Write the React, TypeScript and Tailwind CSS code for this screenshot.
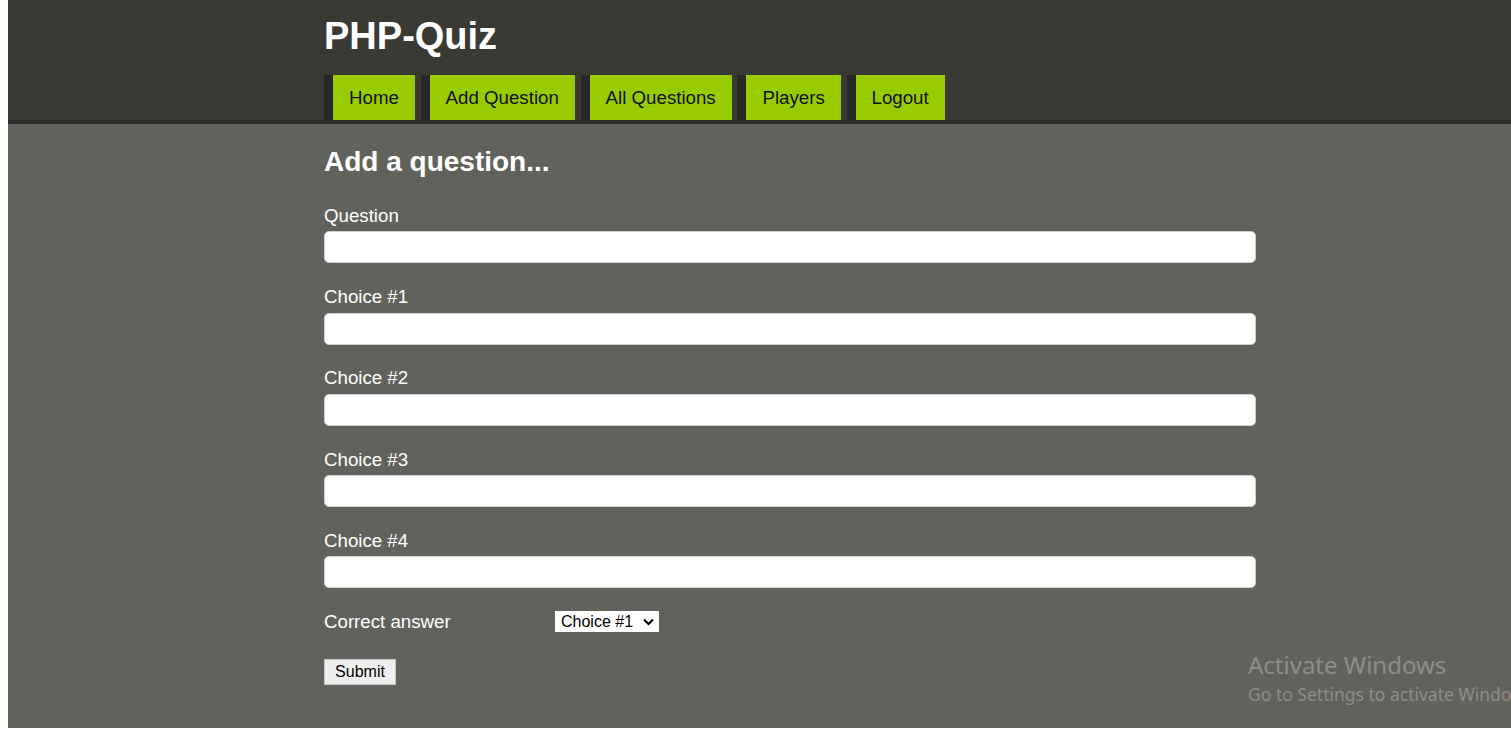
import React from 'react'

const navItems = ['Home', 'Add Question', 'All Questions', 'Players', 'Logout']
const fields = ['Question', 'Choice #1', 'Choice #2', 'Choice #3', 'Choice #4']

export default function App() {
  return (
    <div className="relative h-[736px] w-full overflow-hidden bg-white pl-2 pb-2 font-['Liberation_Sans',Arial,sans-serif] text-[18.7px]">
      <div className="flex h-full flex-col">
        {/* Header */}
        <header className="border-b-4 border-[#2b2b28] bg-[#3a3a35]">
          <div className="pl-[316px]">
            <h1 className="pt-[15px] text-[38px] font-bold leading-[1.15] text-white">PHP-Quiz</h1>
            <nav className="mt-[16px] flex gap-[5.75px]">
              {navItems.map((item) => (
                <div key={item} className="border-l-[9px] border-[#282826]">
                  <a href="#" className="flex h-[45px] items-center bg-[#99cc00] px-4 pt-[2px] text-[#111]">
                    {item}
                  </a>
                </div>
              ))}
            </nav>
          </div>
        </header>

        {/* Form */}
        <main className="flex-1 bg-[#62625d] pl-[316px] text-white">
          <h2 className="pt-[22px] text-[28px] font-bold leading-[1.15]">Add a question...</h2>

          <form className="mt-[27px] w-[932px]">
            {fields.map((label) => (
              <div key={label} className="mb-[22.75px]">
                <label className="block leading-[1.15]">{label}</label>
                <input
                  type="text"
                  className="mt-[5px] block h-8 w-full rounded-[5px] border border-[#cfcfcf] bg-white px-2 text-base text-black outline-none"
                />
              </div>
            ))}

            <div className="flex items-center">
              <label className="w-[231px] leading-[1.15]">Correct answer</label>
              <div className="relative">
                <select className="block h-[21px] w-[104px] appearance-none bg-white pl-[6px] text-base leading-none text-black outline-none">
                  <option>Choice #1</option>
                  <option>Choice #2</option>
                  <option>Choice #3</option>
                  <option>Choice #4</option>
                </select>
                <svg
                  className="pointer-events-none absolute right-[5px] top-[7px]"
                  width="11"
                  height="8"
                  viewBox="0 0 11 8"
                  fill="none"
                >
                  <path d="M1 1.5 5.5 6 10 1.5" stroke="#000" strokeWidth="2" />
                </svg>
              </div>
            </div>

            <button
              type="button"
              className="mt-[26px] h-[26px] w-[72px] border border-[#c4c4c4] bg-[#efefef] text-base text-black"
            >
              Submit
            </button>
          </form>
        </main>
      </div>

      {/* Windows watermark */}
      <div className="pointer-events-none absolute left-[1248px] top-[651px] whitespace-nowrap font-['Segoe_UI','Noto_Sans',sans-serif] text-[#8d8d89]">
        <div className="text-[24px] leading-[1.2]">Activate Windows</div>
        <div className="mt-[4px] text-[17.5px] leading-[1.2]">Go to Settings to activate Windows.</div>
      </div>
    </div>
  )
}
